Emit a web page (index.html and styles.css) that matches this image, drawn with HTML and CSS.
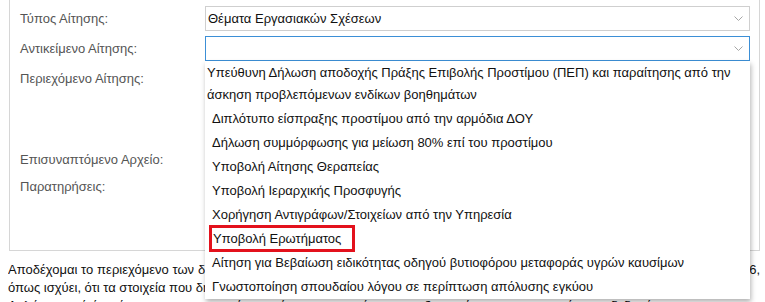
FILE: index.html
```html
<!DOCTYPE html>
<html lang="el">
<head>
<meta charset="UTF-8">
<meta name="viewport" content="width=device-width, initial-scale=1.0">
<title>Νέα Αίτηση</title>
<link rel="stylesheet" href="styles.css">
</head>
<body>
<div class="page">
    <div class="panel">
        <div class="row">
            <label class="label">Τύπος Αίτησης:</label>
            <div class="select">
                <span class="value">Θέματα Εργασιακών Σχέσεων</span>
                <svg class="chevron" width="9" height="6" viewBox="0 0 9 6"><polyline points="0.5,0.5 4.5,4.5 8.5,0.5" fill="none" stroke="#a6a6a6" stroke-width="1"/></svg>
            </div>
        </div>
        <div class="row">
            <label class="label">Αντικείμενο Αίτησης:</label>
            <div class="select select-open">
                <span class="value"></span>
                <svg class="chevron" width="9" height="6" viewBox="0 0 9 6"><polyline points="0.5,0.5 4.5,4.5 8.5,0.5" fill="none" stroke="#a6a6a6" stroke-width="1"/></svg>
                <ul class="options">
                    <li class="first">Υπεύθυνη Δήλωση αποδοχής Πράξης Επιβολής Προστίμου (ΠΕΠ) και παραίτησης από την άσκηση προβλεπόμενων ενδίκων βοηθημάτων</li>
                    <li>Διπλότυπο είσπραξης προστίμου από την αρμόδια ΔΟΥ</li>
                    <li>Δήλωση συμμόρφωσης για μείωση 80% επί του προστίμου</li>
                    <li>Υποβολή Αίτησης Θεραπείας</li>
                    <li>Υποβολή Ιεραρχικής Προσφυγής</li>
                    <li>Χορήγηση Αντιγράφων/Στοιχείων από την Υπηρεσία</li>
                    <li><span class="marked">Υποβολή Ερωτήματος</span></li>
                    <li>Αίτηση για Βεβαίωση ειδικότητας οδηγού βυτιοφόρου μεταφοράς υγρών καυσίμων</li>
                    <li>Γνωστοποίηση σπουδαίου λόγου σε περίπτωση απόλυσης εγκύου</li>
                </ul>
            </div>
        </div>
        <div class="row">
            <label class="label">Περιεχόμενο Αίτησης:</label>
            <textarea class="textarea content"></textarea>
        </div>
        <div class="row">
            <label class="label">Επισυναπτόμενο Αρχείο:</label>
            <div class="file"></div>
        </div>
        <div class="row">
            <label class="label">Παρατηρήσεις:</label>
            <textarea class="textarea notes"></textarea>
        </div>
    </div>

    <div class="terms">
        <span class="line full">Αποδέχομαι το περιεχόμενο των δηλώσεων της αίτησης σύμφωνα με το Ν. 4624/2019 και τον Κανονισμό (ΕΕ) 2016/679 του 2016,</span>
        <span class="line">όπως ισχύει, ότι τα στοιχεία που δηλώνω είναι αληθή και ότι έχω λάβει γνώση της σχετικής ενημέρωσης.</span>
        <span class="line">Δηλώνω ρητά ότι σύμφωνα με τα στοιχεία της αίτησης συναινώ στην επεξεργασία των προσωπικών μου δεδομένων για τους σκοπούς της αίτησης και τα</span>
    </div>
</div>
</body>
</html>
```

FILE: styles.css
```css
body {
    margin: 0;
    padding: 0;
    background-color: #fff;
    font-family: "Liberation Sans", Arial, sans-serif;
    font-size: 13px;
    color: #111;
    overflow: hidden;
}

.page {
    padding-left: 8px;
    width: 752px;
}

.panel {
    margin-left: 1px;
    border: 1px solid #d6d6d6;
    border-top: none;
    padding: 6px 9px 6px 10px;
    display: flex;
    flex-direction: column;
    gap: 5px;
}

.row {
    display: grid;
    grid-template-columns: 185px 1fr;
    align-items: start;
}

.label {
    color: #555;
    line-height: 18px;
    padding-top: 4px;
}

.select {
    position: relative;
    height: 25px;
    box-sizing: border-box;
    border: 1px solid #cfcfcf;
    display: flex;
    align-items: center;
    padding-left: 2px;
}

.select .value {
    flex: 1;
    color: #111;
}

.select-open {
    border-color: #3c8fd6;
}

.chevron {
    margin-right: 6px;
}

.options {
    position: absolute;
    top: 24px;
    left: -1px;
    right: -1px;
    margin: 0;
    padding: 0;
    list-style-type: none;
    background-color: #fff;
    box-shadow: 1px 3px 5px rgba(0, 0, 0, 0.3);
    z-index: 5;
}

.options li {
    line-height: 22px;
    padding: 1px 6px 1px 7px;
    color: #111;
}

.options li.first {
    padding-left: 2px;
}

.marked {
    display: inline-block;
    line-height: 19px;
    padding: 1px 11px 1px 1px;
    outline: 3px solid #e3111c;
}

.textarea {
    display: block;
    width: 100%;
    box-sizing: border-box;
    border: 1px solid #cfcfcf;
    resize: none;
    margin: 0;
}

.content {
    height: 76px;
}

.file {
    height: 18px;
}

.notes {
    height: 70px;
}

.terms {
    margin-top: 10px;
    line-height: 18px;
    color: #111;
}

.line {
    display: block;
    white-space: nowrap;
    overflow: hidden;
}

.line.full {
    text-align: justify;
    text-align-last: justify;
}
```
